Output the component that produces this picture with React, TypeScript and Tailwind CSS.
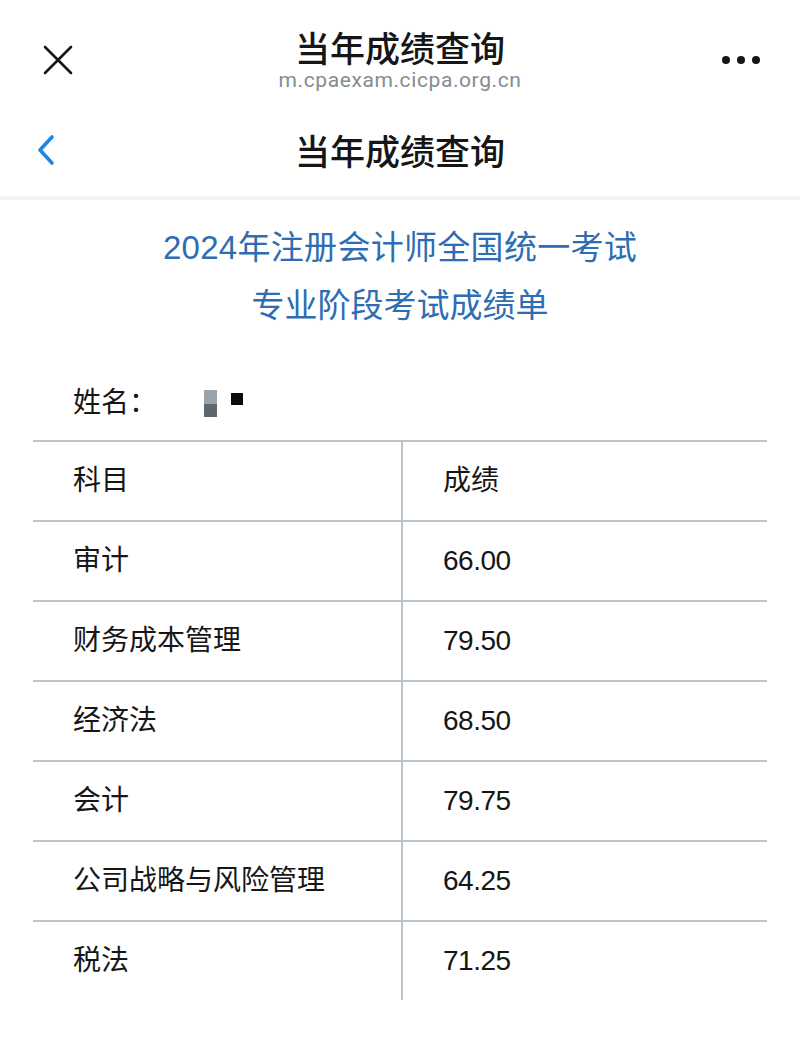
const scores = [
  { subject: "审计", score: "66.00" },
  { subject: "财务成本管理", score: "79.50" },
  { subject: "经济法", score: "68.50" },
  { subject: "会计", score: "79.75" },
  { subject: "公司战略与风险管理", score: "64.25" },
  { subject: "税法", score: "71.25" },
]

const font = "font-['Liberation_Sans','Noto_Sans_CJK_SC',sans-serif]"

export default function App() {
  return (
    <div className={`w-[800px] min-h-[1044px] bg-white text-[#161616] ${font}`}>
      {/* Browser top bar */}
      <div className="relative h-[110px] flex flex-col items-center pt-[28px]">
        <svg className="absolute left-[42px] top-[44px]" width="32" height="32" viewBox="0 0 32 32">
          <path d="M3 3 L29 29 M29 3 L3 29" stroke="#161616" strokeWidth="2.6" strokeLinecap="round" />
        </svg>
        <div className="text-[35px] leading-[38px] font-['Noto_Sans_CJK_SC',sans-serif] font-medium">当年成绩查询</div>
        <div className="mt-[2px] text-[21px] leading-[24px] text-[#858b93] tracking-[0.6px] font-['Roboto',sans-serif]">
          m.cpaexam.cicpa.org.cn
        </div>
        <div className="absolute right-[40px] top-[56px] flex gap-[7px]">
          <span className="w-[8px] h-[8px] rounded-full bg-[#161616]" />
          <span className="w-[8px] h-[8px] rounded-full bg-[#161616]" />
          <span className="w-[8px] h-[8px] rounded-full bg-[#161616]" />
        </div>
      </div>

      {/* Page nav bar */}
      <div className="relative h-[86px] pb-[6px] flex items-center justify-center">
        <svg className="absolute left-[34px] top-[24px]" width="24" height="32" viewBox="0 0 24 32">
          <path d="M18 3 L6 16 L18 29" fill="none" stroke="#1d86e3" strokeWidth="3.6" strokeLinecap="round" strokeLinejoin="round" />
        </svg>
        <div className="text-[35px] leading-[40px] font-['Noto_Sans_CJK_SC',sans-serif] font-medium">当年成绩查询</div>
      </div>
      <div className="h-[4px] bg-[#f3f3f3]" />

      {/* Heading */}
      <div className="pt-[19px] text-center text-[#2f6db3] text-[33px] leading-[58px]">
        <div className="tracking-[0.3px]">2024年注册会计师全国统一考试</div>
        <div>专业阶段考试成绩单</div>
      </div>

      {/* Name */}
      <div className="mt-[48px] mb-[17px] h-[40px] pl-[73px] flex items-center text-[28px] leading-[40px]">
        <span>姓名：</span>
        <span className="ml-[47px] flex items-start gap-[14px]">
          <span className="flex flex-col">
            <span className="w-[13px] h-[14px] bg-[#9aa2aa]" />
            <span className="w-[13px] h-[13px] bg-[#5f666d]" />
          </span>
          <span className="mt-[3px] w-[12px] h-[12px] bg-[#0c0c0c]" />
        </span>
      </div>

      {/* Score table */}
      <div className="mx-[33px] border-t-2 border-[#bcc4cc] text-[28px]">
        <div className="grid grid-cols-[368px_1fr] h-[80px] border-b-2 border-[#bcc4cc]">
          <div className="pl-[40px] flex items-center">科目</div>
          <div className="pl-[40px] flex items-center border-l-2 border-[#bcc4cc]">成绩</div>
        </div>
        {scores.map((row, i) => (
          <div
            key={row.subject}
            className={`grid grid-cols-[368px_1fr] ${i === scores.length - 1 ? "h-[78px]" : "h-[80px] border-b-2 border-[#bcc4cc]"}`}
          >
            <div className="pl-[40px] flex items-center">{row.subject}</div>
            <div className="pl-[40px] flex items-center border-l-2 border-[#bcc4cc] tracking-[-0.5px]">{row.score}</div>
          </div>
        ))}
      </div>
    </div>
  )
}
